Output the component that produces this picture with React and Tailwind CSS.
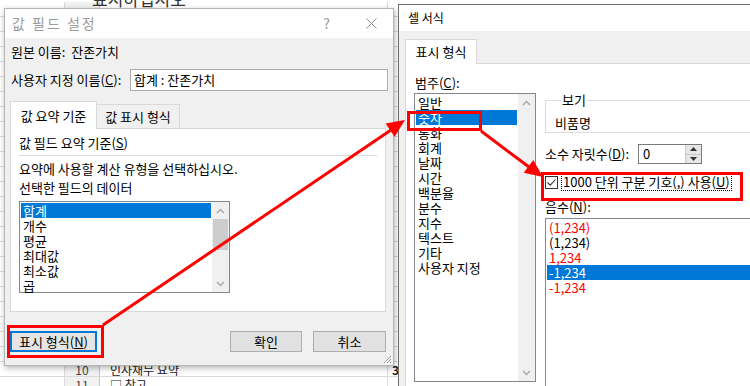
import React from 'react';

function Chevron({ up }) {
  return (
    <svg width="9" height="6" viewBox="0 0 9 6">
      <path d={up ? 'M1 5 L4.5 1.5 L8 5' : 'M1 1 L4.5 4.5 L8 1'} fill="none" stroke="#a6a6a6" strokeWidth="1.4" />
    </svg>
  );
}

function ScrollBar({ thumb }) {
  return (
    <div className="w-[17px] bg-[#f0f0f0] flex flex-col">
      <div className="h-[17px] flex items-center justify-center">
        <Chevron up />
      </div>
      {thumb ? <div className="mx-[1px] h-[31px] bg-[#cdcdcd]" /> : null}
      <div className="flex-1" />
      <div className="h-[17px] flex items-center justify-center">
        <Chevron />
      </div>
    </div>
  );
}

const sheetRows = Array.from({ length: 26 }, (_, i) => i - 14);

function Sheet() {
  return (
    <div className="pt-[2px] flex flex-col text-[12px] leading-[15px] text-[#222]">
      {sheetRows.map((n) => (
        <div key={n} className="h-[15px] flex border-b border-[#dadada]">
          <div className="w-[65px] border-r border-[#dadada]" />
          <div className="w-[35px] bg-[#f2f2f2] border-r border-[#c8c8c8] flex items-center justify-center text-[#444]">
            {n > 0 ? n : ''}
          </div>
          <div className="w-[288px] pl-[10px] flex items-center border-r border-[#dadada]">
            {n === 10 ? '인사재무 요약' : n === 11 ? '□ 참고' : ''}
          </div>
          <div className="w-[30px] flex items-center pl-[4px] font-bold">{n === 10 ? '3' : ''}</div>
        </div>
      ))}
    </div>
  );
}

function ValueFieldDialog() {
  return (
    <div className="absolute left-[4px] top-[8px] w-[390px] h-[358px] bg-[#f0f0f0] border border-[#b5b5b5] shadow-[1px_2px_6px_rgba(0,0,0,0.3)] flex flex-col">
      <div className="h-[29px] bg-white flex items-center pl-[7px] text-[14px] text-[#9a9a9a]">
        <span className="tracking-[2px]">값 필드 설정</span>
        <span className="ml-auto text-[14px]">?</span>
        <svg width="11" height="11" viewBox="0 0 11 11" className="ml-[36px] mr-[16px]">
          <path d="M0.5 0.5 L10.5 10.5 M10.5 0.5 L0.5 10.5" stroke="#8a8a8a" strokeWidth="1" />
        </svg>
      </div>

      <div className="flex-1 px-[5px] pt-[6px] text-[13px] text-black">
        <div className="h-[16px] leading-[16px] pl-[1px]">원본 이름:&nbsp;&nbsp;잔존가치</div>

        <div className="mt-[9px] flex items-center h-[22px]">
          <div className="w-[120px] pl-[1px] whitespace-nowrap">
            사용자 지정 이름(<span className="underline">C</span>):
          </div>
          <div className="w-[258px] h-[22px] bg-white border border-[#adadad] flex items-center pl-[3px]">
            합계 : 잔존가치
          </div>
        </div>

        <div className="mt-[10px] flex h-[27px]">
          <div className="self-start h-[28px] w-[87px] bg-white border border-b-0 border-[#d9d9d9] flex items-center justify-center relative z-10">
            값 요약 기준
          </div>
          <div className="self-end h-[24px] w-[83px] bg-[#f0f0f0] border border-l-0 border-b-0 border-[#d9d9d9] flex items-center justify-center">
            값 표시 형식
          </div>
        </div>

        <div className="w-[376px] h-[184px] bg-white border border-[#d9d9d9] px-[8px] pt-[6px]">
          <div className="h-[16px] leading-[16px]">
            값 필드 요약 기준(<span className="underline">S</span>)
          </div>
          <div className="h-px bg-[#dcdcdc] mt-[4px]" />
          <div className="mt-[5px] h-[16px] leading-[16px]">요약에 사용할 계산 유형을 선택하십시오.</div>
          <div className="mt-[3px] h-[16px] leading-[16px]">선택한 필드의 데이터</div>
          <div className="mt-[5px] w-[211px] h-[92px] border border-[#828790] flex">
            <div className="flex-1 p-[1px]">
              {['합계', '개수', '평균', '최대값', '최소값', '곱'].map((t, i) => (
                <div
                  key={t}
                  className={`h-[15px] leading-[15px] pl-[2px] ${i === 0 ? 'bg-[#0078d7] text-white' : ''}`}
                >
                  {t}
                </div>
              ))}
            </div>
            <ScrollBar thumb />
          </div>
        </div>

        <div className="mt-[19px] flex h-[21px]">
          <button
            type="button"
            className="w-[87px] h-[21px] bg-[#e5e5e5] border-2 border-[#0078d7] flex items-center justify-center"
          >
            표시 형식(<span className="underline">N</span>)
          </button>
          <button
            type="button"
            className="ml-auto w-[72px] h-[21px] bg-[#e1e1e1] border border-[#adadad] flex items-center justify-center"
          >
            확인
          </button>
          <button
            type="button"
            className="ml-[11px] mr-[2px] w-[73px] h-[21px] bg-[#e1e1e1] border border-[#adadad] flex items-center justify-center"
          >
            취소
          </button>
        </div>
      </div>

      <svg width="10" height="10" viewBox="0 0 10 10" className="absolute right-[1px] bottom-[1px]">
        <path d="M9 2 L2 9 M9 5 L5 9 M9 8 L8 9" stroke="#a0a0a0" strokeWidth="1" />
      </svg>
    </div>
  );
}

function FormatCellsDialog() {
  const categories = ['일반', '숫자', '통화', '회계', '날짜', '시간', '백분율', '분수', '지수', '텍스트', '기타', '사용자 지정'];
  const negatives = [
    { t: '(1,234)', red: true },
    { t: '(1,234)' },
    { t: '1,234', red: true },
    { t: '-1,234', sel: true },
    { t: '-1,234', red: true },
  ];
  return (
    <div className="absolute left-[398px] top-[4px] w-[370px] h-[400px] bg-[#f0f0f0] border border-[#6e6e6e] flex flex-col text-[13px] text-black">
      <div className="h-[30px] bg-white flex items-center pl-[9px] text-[12px]">셀 서식</div>
      <div className="flex-1 pl-[6px] pt-[8px]">
        <div className="flex h-[24px]">
          <div className="self-start w-[72px] h-[25px] bg-white border border-b-0 border-[#d9d9d9] relative z-10 flex items-center justify-center">
            표시 형식
          </div>
        </div>
        <div className="bg-white border border-[#d9d9d9] h-[340px] flex">
          <div className="pl-[8px] pt-[11px]">
            <div className="h-[16px] leading-[16px] pl-[1px]">
              범주(<span className="underline">C</span>):
            </div>
            <div className="mt-[2px] w-[122px] h-[289px] border border-[#828790] flex">
              <div className="flex-1 p-[1px]">
                {categories.map((c, i) => (
                  <div
                    key={c}
                    className={`h-[15px] leading-[15px] pl-[2px] whitespace-nowrap ${i === 1 ? 'bg-[#0078d7] text-white' : ''}`}
                  >
                    {c}
                  </div>
                ))}
              </div>
              <ScrollBar />
            </div>
          </div>

          <div className="ml-[9px] pt-[28px] w-[215px]">
            <fieldset className="border border-[#dcdcdc] h-[41px] pl-[9px]">
              <legend className="ml-[6px] px-[1px] h-[16px] leading-[16px]">보기</legend>
              <div className="mt-[7px] h-[16px] leading-[16px]">비품명</div>
            </fieldset>

            <div className="mt-[11px] h-[20px] flex items-center">
              <div className="w-[93px] whitespace-nowrap">
                소수 자릿수(<span className="underline">D</span>):
              </div>
              <div className="w-[64px] h-[20px] border border-[#7a7a7a] bg-white flex">
                <div className="flex-1 pl-[4px] flex items-center">0</div>
                <div className="w-[16px] flex flex-col border-l border-[#c9c9c9]">
                  <div className="flex-1 bg-[#e6e6e6] border-b border-[#c9c9c9] flex items-center justify-center">
                    <svg width="7" height="4" viewBox="0 0 7 4">
                      <path d="M0 4 L3.5 0 L7 4 Z" fill="#333" />
                    </svg>
                  </div>
                  <div className="flex-1 bg-[#e6e6e6] flex items-center justify-center">
                    <svg width="7" height="4" viewBox="0 0 7 4">
                      <path d="M0 0 L3.5 4 L7 0 Z" fill="#333" />
                    </svg>
                  </div>
                </div>
              </div>
            </div>

            <div className="mt-[9px] h-[18px] flex items-center">
              <div className="w-[13px] h-[13px] border border-[#333] bg-white flex items-center justify-center">
                <svg width="11" height="11" viewBox="0 0 11 11">
                  <path d="M1.5 5.5 L4.2 8.2 L9.5 2.5" fill="none" stroke="#333" strokeWidth="1.1" />
                </svg>
              </div>
              <div className="ml-[3px] h-[18px] px-[1px] border border-dotted border-black flex items-center whitespace-nowrap">
                1000 단위 구분 기호(,) 사용(<span className="underline">U</span>)
              </div>
            </div>

            <div className="mt-[8px] h-[16px] leading-[16px]">
              음수(<span className="underline">N</span>):
            </div>
            <div className="mt-[3px] h-[170px] border border-[#828790] p-[1px]">
              {negatives.map((n, i) => (
                <div
                  key={i}
                  className={`h-[15px] leading-[15px] pl-[2px] ${
                    n.sel ? 'bg-[#0078d7] text-white' : n.red ? 'text-[#ff0000]' : ''
                  }`}
                >
                  {n.t}
                </div>
              ))}
            </div>
          </div>
        </div>
      </div>
    </div>
  );
}

function Annotations() {
  return (
    <svg width="750" height="386" viewBox="0 0 750 386" className="absolute inset-0 z-20 pointer-events-none">
      <g fill="none" stroke="#ff0000" strokeWidth="3">
        <rect x="8.5" y="326.5" width="94" height="30" />
        <rect x="408.5" y="112.5" width="72" height="17" />
        <rect x="542.5" y="173.5" width="199" height="26" />
        <line x1="103" y1="325" x2="391" y2="130" />
        <line x1="481" y1="131" x2="529" y2="167" />
      </g>
      <polygon points="405,120 394.6,136.7 385.6,123.5" fill="#ff0000" />
      <polygon points="543,177 523.7,172.7 533.3,159.9" fill="#ff0000" />
    </svg>
  );
}

export default function App() {
  return (
    <div className="w-[750px] h-[386px] relative overflow-hidden bg-white font-['Noto_Sans_CJK_KR','Noto_Sans',sans-serif]">
      <Sheet />
      <div className="absolute top-[-14px] left-[92px] text-[17px] text-[#333]">표시하십시오</div>
      <ValueFieldDialog />
      <FormatCellsDialog />
      <Annotations />
    </div>
  );
}
